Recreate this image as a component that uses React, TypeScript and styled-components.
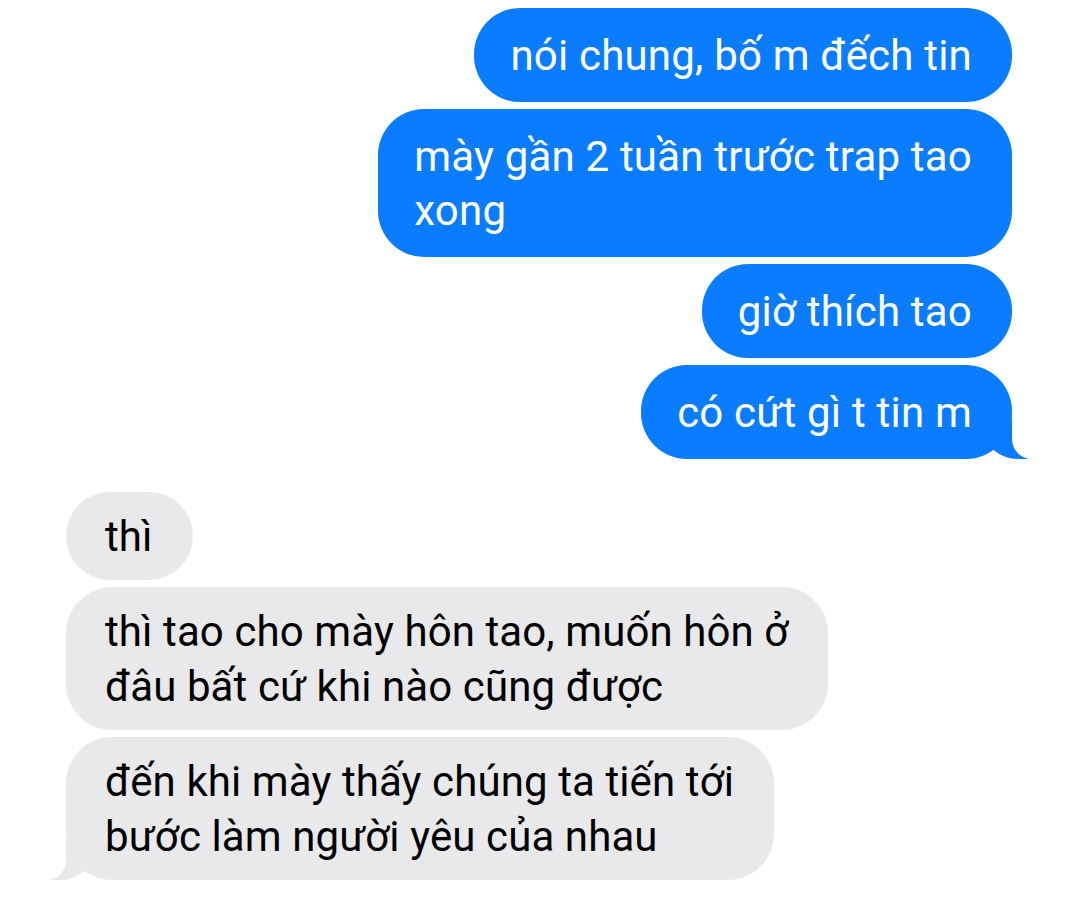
import React from "react";
import styled, { createGlobalStyle } from "styled-components";

type Message = {
  from: "me" | "them";
  lines: string[];
  tail?: boolean;
};

const messages: Message[] = [
  { from: "me", lines: ["nói chung, bố m đếch tin"] },
  { from: "me", lines: ["mày gần 2 tuần trước trap tao", "xong"] },
  { from: "me", lines: ["giờ thích tao"] },
  { from: "me", lines: ["có cứt gì t tin m"], tail: true },
  { from: "them", lines: ["thì"] },
  { from: "them", lines: ["thì tao cho mày hôn tao, muốn hôn ở", "đâu bất cứ khi nào cũng được"] },
  { from: "them", lines: ["đến khi mày thấy chúng ta tiến tới", "bước làm người yêu của nhau"], tail: true },
];

const App: React.FC = () => {
  return (
    <>
      <GlobalStyle />
      <Thread>
        {messages.map((m, i) => {
          const prev = messages[i - 1];
          const newGroup = !!prev && prev.from !== m.from;
          const mine = m.from === "me";
          return (
            <Row key={i} $mine={mine} $gap={newGroup}>
              <Bubble $mine={mine} $tail={!!m.tail}>
                {m.lines.map((line, j) => (
                  <Line key={j}>{line}</Line>
                ))}
              </Bubble>
            </Row>
          );
        })}
      </Thread>
    </>
  );
};

export default App;

const GlobalStyle = createGlobalStyle`
  html, body {
    margin: 0;
    padding: 0;
    background: #ffffff;
  }
  body {
    font-family: Roboto, "Noto Sans", "Liberation Sans", sans-serif;
  }
`;

const Thread = styled.div`
  width: 1080px;
  height: 901px;
  box-sizing: border-box;
  padding: 8px 68px 0 66px;
  display: flex;
  flex-direction: column;
  gap: 7px;
  overflow: hidden;
`;

const Row = styled.div<{ $mine: boolean; $gap: boolean }>`
  display: flex;
  justify-content: ${(p) => (p.$mine ? "flex-end" : "flex-start")};
  margin-top: ${(p) => (p.$gap ? "26px" : "0")};
`;

const Bubble = styled.div<{ $mine: boolean; $tail: boolean }>`
  position: relative;
  padding: ${(p) => (p.$mine ? "21px 40px 19px 36px" : "17px 40px 16px 39px")};
  border-radius: 46px;
  background: ${(p) => (p.$mine ? "#0a7cff" : "#e9e9eb")};
  color: ${(p) => (p.$mine ? "#ffffff" : "#000000")};
  font-size: 42px;
  line-height: ${(p) => (p.$mine ? "54px" : "55px")};
  letter-spacing: ${(p) => (p.$mine ? "0.2px" : "0.1px")};

  ${(p) =>
    p.$tail &&
    `
    &::before {
      content: "";
      position: absolute;
      bottom: 0;
      ${p.$mine ? "right: -16px;" : "left: -16px;"}
      width: 44px;
      height: 40px;
      background: ${p.$mine ? "#0a7cff" : "#e9e9eb"};
      ${p.$mine ? "border-bottom-left-radius: 34px 30px;" : "border-bottom-right-radius: 34px 30px;"}
    }
    &::after {
      content: "";
      position: absolute;
      bottom: 0;
      ${p.$mine ? "right: -40px;" : "left: -40px;"}
      width: 40px;
      height: 40px;
      background: #ffffff;
      ${p.$mine ? "border-bottom-left-radius: 20px;" : "border-bottom-right-radius: 20px;"}
    }
  `}
`;

const Line = styled.div`
  white-space: nowrap;
`;
